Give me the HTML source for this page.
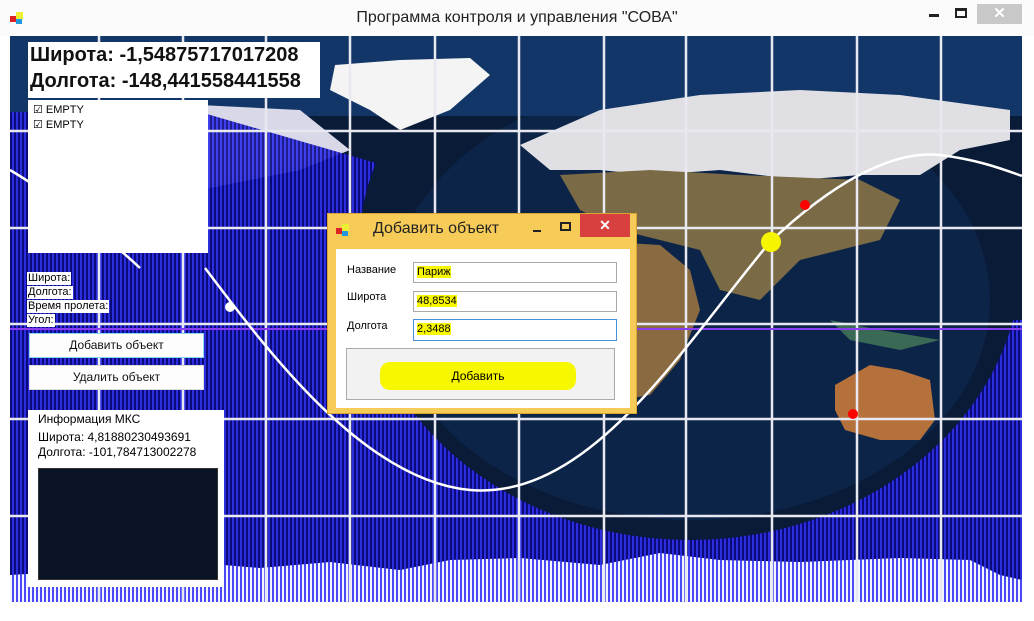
<!DOCTYPE html>
<html><head><meta charset="utf-8"><style>
*{margin:0;padding:0;box-sizing:border-box}
body{width:1034px;height:621px;background:#fff;position:relative;overflow:hidden;font-family:"Liberation Sans",sans-serif}
.abs{position:absolute}
.title{left:0;top:0;width:1034px;height:36px;background:#fbfbfb;text-align:center;font-size:16px;line-height:36px;color:#222}
.lbl{font-size:11px;background:#fff;color:#000;line-height:13px;padding:0 1px}
.btn{background:#fdfdfd;border:1px solid #ddd;font-size:12px;text-align:center;line-height:23px;color:#111}
.tb{background:#fff;border:1px solid #aaa;font-size:11px;line-height:19px;padding-left:3px}
.hl{background:#f7f700}
</style></head><body>
<div class="abs title">Программа контроля и управления "СОВА"</div>
<svg class="abs" style="left:8px;top:10px" width="18" height="18" viewBox="0 0 18 18"><rect x="2" y="6" width="6" height="6" fill="#d22"/><rect x="8" y="2" width="7" height="7" fill="#ee3"/><rect x="8" y="9" width="6" height="5" fill="#29d"/></svg>
<div class="abs" style="left:929px;top:14px;width:10px;height:3px;background:#222"></div>
<div class="abs" style="left:955px;top:8px;width:12px;height:10px;border:2px solid #222;border-top-width:3px"></div>
<div class="abs" style="left:977px;top:4px;width:45px;height:20px;background:#c8c8c8;color:#fff;text-align:center;font-size:15px;line-height:20px;font-weight:bold">✕</div>

<svg class="abs" style="left:10px;top:36px" width="1012" height="566" viewBox="10 36 1012 566">
<defs>
<pattern id="st" width="4" height="10" patternUnits="userSpaceOnUse"><rect width="4" height="10" fill="#0a0a80"/><rect width="2" height="10" fill="#2f2ff0"/></pattern>
<pattern id="st2" width="4" height="10" patternUnits="userSpaceOnUse"><rect width="4" height="10" fill="#f4f4ff"/><rect width="2" height="10" fill="#4a4af5"/></pattern>
<mask id="night"><rect x="0" y="0" width="1100" height="700" fill="#fff"/><ellipse cx="690" cy="255" rx="332" ry="285" fill="#000"/><rect x="0" y="0" width="1100" height="112" fill="#000"/><polygon points="200,112 620,112 400,170" fill="#000"/><rect x="940" y="0" width="100" height="320" fill="#000"/></mask>
</defs>
<rect x="10" y="36" width="1012" height="566" fill="#0a1b38"/>
<ellipse cx="690" cy="300" rx="300" ry="220" fill="#0c2448"/>
<rect x="10" y="36" width="1012" height="80" fill="#123667"/>
<path d="M335,65 L400,60 L470,58 L490,75 L450,110 L400,130 L370,110 L330,90Z" fill="#f4f4f4"/>
<path d="M520,145 L600,110 L700,95 L800,90 L900,95 L1010,110 L1010,140 L960,150 L920,175 L860,175 L800,180 L720,170 L650,175 L600,170 L550,170Z" fill="#e0e0e4"/>
<path d="M60,110 L200,105 L300,110 L350,150 L300,170 L200,190 L120,170 L60,150Z" fill="#d8d8e8"/>
<path d="M560,175 L650,170 L740,175 L860,180 L900,200 L880,240 L840,250 L800,260 L760,300 L720,290 L700,250 L660,240 L620,230 L580,210Z" fill="#7a6a45"/>
<path d="M580,240 L660,245 L690,270 L700,310 L680,360 L650,395 L620,400 L600,350 L580,300Z" fill="#8a6a40"/>
<path d="M835,385 L870,365 L900,370 L930,380 L935,420 L920,440 L880,440 L845,430 L835,410Z" fill="#b5713c"/>
<path d="M830,320 L880,330 L940,340 L900,350 L850,340Z" fill="#3a6a55"/>
<rect x="10" y="36" width="1012" height="566" fill="url(#st)" mask="url(#night)" opacity="0.9"/>
<path d="M10,575 L60,572 L120,565 L200,563 L260,568 L330,562 L400,570 L450,560 L520,558 L600,565 L660,553 L720,560 L800,562 L900,558 L970,560 L1000,575 L1022,580 L1022,602 L10,602Z" fill="url(#st2)"/>
<g stroke="#e8e8f0" stroke-width="2.5">
<line x1="99" y1="36" x2="99" y2="602"/><line x1="183" y1="36" x2="183" y2="602"/><line x1="266" y1="36" x2="266" y2="602"/><line x1="350" y1="36" x2="350" y2="602"/><line x1="435" y1="36" x2="435" y2="602"/><line x1="519" y1="36" x2="519" y2="602"/><line x1="604" y1="36" x2="604" y2="602"/><line x1="686" y1="36" x2="686" y2="602"/><line x1="772" y1="36" x2="772" y2="602"/><line x1="857" y1="36" x2="857" y2="602"/><line x1="941" y1="36" x2="941" y2="602"/>
<line x1="10" y1="131" x2="1022" y2="131"/><line x1="10" y1="228" x2="1022" y2="228"/><line x1="10" y1="324" x2="1022" y2="324"/><line x1="10" y1="419" x2="1022" y2="419"/><line x1="10" y1="516" x2="1022" y2="516"/>
</g>
<line x1="10" y1="329" x2="1022" y2="329" stroke="#8a3cf0" stroke-width="2"/>
<path d="M10,170 C60,200 110,240 140,268" stroke="#fff" stroke-width="2.5" fill="none"/>
<path d="M205,268 C260,340 360,480 470,490 C590,500 680,350 770,242 C830,185 890,150 940,155 C980,160 1005,170 1022,176" stroke="#fff" stroke-width="2.5" fill="none"/>
<circle cx="230" cy="307" r="5" fill="#fff"/>
<circle cx="771" cy="242" r="10" fill="#f5f500"/>
<circle cx="805" cy="205" r="5" fill="#f00"/>
<circle cx="853" cy="414" r="5" fill="#f00"/>
</svg>

<div class="abs" style="left:28px;top:42px;width:292px;height:56px;background:#fff;font-weight:bold;font-size:20px;line-height:26px;padding-left:2px;color:#111">Широта: -1,54875717017208<br>Долгота: -148,441558441558</div>
<div class="abs" style="left:28px;top:100px;width:180px;height:153px;background:#fff;font-size:11px;line-height:15px;padding:3px 0 0 5px">
<div>☑ EMPTY</div><div>☑ EMPTY</div></div>
<div class="abs lbl" style="left:27px;top:272px">Широта:</div>
<div class="abs lbl" style="left:27px;top:286px">Долгота:</div>
<div class="abs lbl" style="left:27px;top:300px">Время пролета:</div>
<div class="abs lbl" style="left:27px;top:314px">Угол:</div>
<div class="abs btn" style="left:29px;top:333px;width:175px;height:25px;border-color:#8ad8f0">Добавить объект</div>
<div class="abs btn" style="left:29px;top:365px;width:175px;height:25px">Удалить объект</div>
<div class="abs" style="left:28px;top:410px;width:196px;height:177px;background:#fff;font-size:12px;line-height:15px;padding:2px 0 0 10px">Информация МКС<div style="margin-top:3px">Широта: 4,81880230493691<br>Долгота: -101,784713002278</div></div>
<div class="abs" style="left:38px;top:468px;width:180px;height:112px;background:#0b1426;border:1px solid #333"></div>

<div class="abs" style="left:327px;top:213px;width:310px;height:201px;background:#f6cb58;border:1px solid #d9a530"></div>
<svg class="abs" style="left:334px;top:222px" width="18" height="18" viewBox="0 0 18 18"><rect x="2" y="6" width="6" height="6" fill="#d22"/><rect x="8" y="2" width="7" height="7" fill="#ee3"/><rect x="8" y="9" width="6" height="5" fill="#29d"/></svg>
<div class="abs" style="left:373px;top:220px;font-size:16px;color:#222">Добавить объект</div>
<div class="abs" style="left:533px;top:230px;width:8px;height:2px;background:#222"></div>
<div class="abs" style="left:560px;top:222px;width:11px;height:9px;border:2px solid #222"></div>
<div class="abs" style="left:580px;top:214px;width:50px;height:23px;background:#d84040;color:#fff;text-align:center;font-size:14px;line-height:23px;font-weight:bold">✕</div>
<div class="abs" style="left:336px;top:249px;width:294px;height:159px;background:#fff"></div>
<div class="abs" style="left:347px;top:264px;font-size:11px">Название</div>
<div class="abs" style="left:347px;top:291px;font-size:11px">Широта</div>
<div class="abs" style="left:347px;top:320px;font-size:11px">Долгота</div>
<div class="abs tb" style="left:413px;top:262px;width:204px;height:21px"><span class="hl">Париж</span></div>
<div class="abs tb" style="left:413px;top:291px;width:204px;height:21px"><span class="hl">48,8534</span></div>
<div class="abs tb" style="left:413px;top:319px;width:204px;height:22px;border-color:#4a90d8"><span class="hl">2,3488</span></div>
<div class="abs" style="left:346px;top:348px;width:269px;height:52px;background:#f2f2f2;border:1px solid #aaa"></div>
<div class="abs" style="left:380px;top:362px;width:196px;height:28px;background:#f7f700;border-radius:10px;font-size:12px;text-align:center;line-height:28px">Добавить</div>
</body></html>
